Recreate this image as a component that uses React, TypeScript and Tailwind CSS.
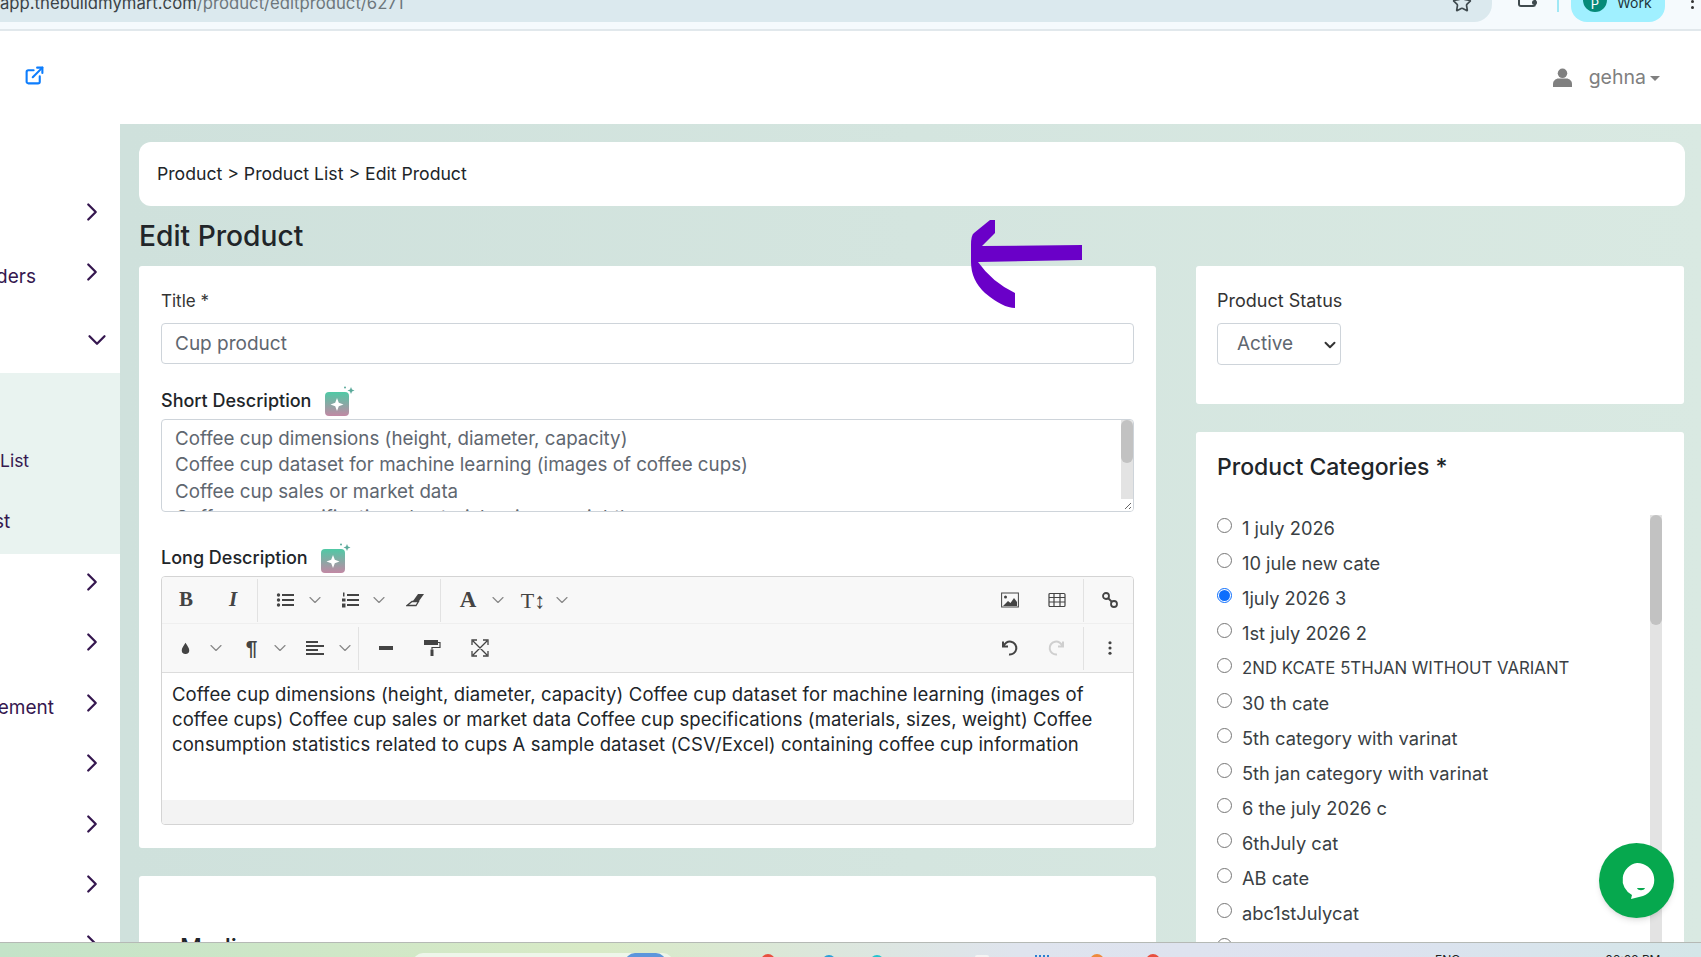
import { ChevronDown, ChevronRight, ExternalLink, Star } from "lucide-react";
import type { ReactNode } from "react";

const font = "font-['Inter','Noto_Sans',sans-serif]";

const categories = [
  "1 july 2026",
  "10 jule new cate",
  "1july 2026 3",
  "1st july 2026 2",
  "2ND KCATE 5THJAN WITHOUT VARIANT",
  "30 th cate",
  "5th category with varinat",
  "5th jan category with varinat",
  "6 the july 2026 c",
  "6thJuly cat",
  "AB cate",
  "abc1stJulycat",
];

function NavRow({ label, labelClass = "" }: { label?: string; labelClass?: string }) {
  return (
    <div className="flex h-[60.4px] items-center justify-end pr-[13px] text-[#35174f]">
      {label && <span className={`shrink-0 whitespace-nowrap text-[19px] ${labelClass}`}>{label}</span>}
      <ChevronRight className="h-[30px] w-[30px] shrink-0" strokeWidth={1.8} />
    </div>
  );
}

function Sidebar() {
  return (
    <aside className="h-full w-[120px] shrink-0 overflow-hidden bg-white pt-[58px]">
      <NavRow />
      <div className="-mt-[1px]">
        <NavRow label="Orders" labelClass="mr-[41px] mt-[12px]" />
      </div>
      <div className="flex h-[71px] items-center justify-end pr-[8px] pt-[6px] text-[#35174f]">
        <ChevronDown className="h-[30px] w-[30px] shrink-0" strokeWidth={1.8} />
      </div>
      <div className="flex h-[181px] flex-col justify-end bg-[#e9f3f0] pb-[1px] text-[19px] text-[#35174f]">
        <div className="flex h-[61px] items-center">
          <span className="text-[17.500px]">List</span>
        </div>
        <div className="flex h-[61px] items-center">
          <span className="-ml-[6px]">st</span>
        </div>
      </div>
      <div className="-mt-[2px]">
        <NavRow />
        <NavRow />
        <NavRow label="ement" labelClass="mr-[23px] mt-[10px]" />
        <NavRow />
        <NavRow />
        <NavRow />
        <NavRow />
      </div>
    </aside>
  );
}

function Sparkle() {
  return (
    <svg viewBox="0 0 32 32" className="h-8 w-8 translate-y-[1px]" aria-hidden="true">
      <defs>
        <linearGradient id="spark" x1="0" y1="0" x2="0" y2="1">
          <stop offset="0" stopColor="#4fc9a5" />
          <stop offset="1" stopColor="#c288a4" />
        </linearGradient>
      </defs>
      <rect x="2" y="7" width="24" height="24" rx="4" fill="url(#spark)" />
      <path d="M14 13l1.800 4.700L20.500 19.500l-4.700 1.800L14 26l-1.800-4.700L7.500 19.500l4.700-1.800z" fill="#fff" />
      <path d="M28 2l1 2.500 2.500 1-2.500 1-1 2.500-1-2.500-2.500-1 2.500-1z" fill="#5aa99a" />
      <circle cx="22" cy="2.500" r="1" fill="#5aa99a" />
    </svg>
  );
}

function Chev() {
  return <ChevronDown className="-mx-[3px] h-[20px] w-[20px] shrink-0 text-[#888]" strokeWidth={1.4} />;
}

function Tool({ children, className }: { children: ReactNode; className: string }) {
  return <div className={`flex h-full shrink-0 items-center justify-center text-[#444] ${className}`}>{children}</div>;
}

function Sep({ className = "" }: { className?: string }) {
  return <div className={`h-[43px] w-px shrink-0 bg-[#e2e2e2] ${className}`} />;
}

const ic = "h-[18px] w-[18px]";

function Toolbar() {
  return (
    <div className="border-b border-[#dcdcdc] bg-[#f8f8f8]">
      <div className="flex h-[47px] items-center border-b border-[#efefef]">
        <Tool className="w-[46px] pl-[2px]"><span className="font-['Liberation_Serif',serif] text-[21px] font-bold">B</span></Tool>
        <Tool className="w-[49px] pl-[1px]"><span className="font-['Liberation_Serif',serif] text-[21px] font-bold italic">I</span></Tool>
        <Sep />
        <Tool className="w-[50px] pl-[4px]">
          <svg viewBox="0 0 18 18" className={ic} fill="currentColor">
            <circle cx="2.500" cy="4" r="1.700" /><circle cx="2.500" cy="9" r="1.700" /><circle cx="2.500" cy="14" r="1.700" />
            <rect x="6" y="3" width="12" height="2" /><rect x="6" y="8" width="12" height="2" /><rect x="6" y="13" width="12" height="2" />
          </svg>
        </Tool>
        <Chev />
        <Tool className="w-[50px] pl-[5px]">
          <svg viewBox="0 0 18 18" className={ic} fill="currentColor">
            <rect x="6" y="3" width="12" height="2" /><rect x="6" y="8" width="12" height="2" /><rect x="6" y="13" width="12" height="2" />
            <rect x="2" y="1.500" width="1.500" height="4" /><rect x="1" y="7.500" width="3.500" height="3" /><rect x="1" y="12.500" width="3.500" height="4" />
          </svg>
        </Tool>
        <Chev />
        <Tool className="w-[54px] pl-[4px]">
          <svg viewBox="0 0 18 14" className={ic} fill="currentColor">
            <path d="M12 1h6l-5 7H7z" /><path d="M6 8.500h6.500L10 12.500H1z" fill="none" stroke="currentColor" strokeWidth="1.300" />
          </svg>
        </Tool>
        <Sep />
        <Tool className="w-[50px] pl-[4px]"><span className="font-['Liberation_Serif',serif] text-[23px] font-bold">A</span></Tool>
        <Chev />
        <Tool className="w-[50px] pl-[6px]"><span className="font-['Liberation_Serif',serif] text-[22px]">T↕</span></Tool>
        <Chev />
        <div className="flex-1" />
        <Tool className="w-[47px] pr-[2px]">
          <svg viewBox="0 0 18 16" className={ic} fill="currentColor">
            <rect x="0.600" y="1" width="16.800" height="14" fill="none" stroke="currentColor" />
            <circle cx="4.500" cy="5" r="1.500" /><path d="M2 14l5-5 2.500 2 3.500-5 3 4v4z" />
          </svg>
        </Tool>
        <Tool className="w-[49px] pr-[4px]">
          <svg viewBox="0 0 18 16" className={ic} fill="none" stroke="currentColor" strokeWidth="1.200">
            <rect x="1" y="1.500" width="16" height="13" rx="1" /><path d="M1 5.500h16M1 10h16M6 1.500v13M12 1.500v13" />
          </svg>
        </Tool>
        <Sep />
        <Tool className="w-[49px] pl-[3px]">
          <svg viewBox="0 0 18 18" className={ic} fill="none" stroke="currentColor" strokeWidth="1.800">
            <circle cx="5" cy="5" r="3" /><circle cx="13" cy="13" r="3" /><path d="M7 7l4 4" />
          </svg>
        </Tool>
      </div>
      <div className="flex h-[48px] items-center">
        <Tool className="w-[47px]">
          <svg viewBox="0 0 18 18" className="h-[15px] w-[15px]" fill="currentColor"><path d="M9 2c2 3.500 4.500 6 4.500 9a4.500 4.500 0 0 1-9 0c0-3 2.500-5.500 4.500-9z" /></svg>
        </Tool>
        <Chev />
        <Tool className="ml-[7px] w-[43px]"><span className="font-['Liberation_Sans',sans-serif] text-[21px] font-bold">¶</span></Tool>
        <Chev />
        <Tool className="ml-[5px] w-[46px]">
          <svg viewBox="0 0 18 18" className={ic} fill="currentColor">
            <rect x="0" y="2" width="12" height="2" /><rect x="0" y="6" width="18" height="2" /><rect x="0" y="10" width="12" height="2" /><rect x="0" y="14" width="18" height="2" />
          </svg>
        </Tool>
        <Chev />
        <Sep className="ml-[6px]" />
        <Tool className="w-[54px]"><div className="h-[4px] w-[14px] bg-[#444]" /></Tool>
        <Tool className="w-[38px]">
          <svg viewBox="0 0 18 18" className={ic} fill="currentColor">
            <path d="M1 1h14v5H1z" /><path d="M15 3.500h2v5H9v2" fill="none" stroke="currentColor" strokeWidth="1.200" /><rect x="7.500" y="10.500" width="3" height="6.500" />
          </svg>
        </Tool>
        <Tool className="w-[56px] pl-[1px]">
          <svg viewBox="0 0 18 18" className={ic} fill="none" stroke="currentColor" strokeWidth="1.300">
            <path d="M1 6V1h5M12 1h5v5M17 12v5h-5M6 17H1v-5M2 2l14 14M16 2L2 16" />
          </svg>
        </Tool>
        <div className="flex-1" />
        <Tool className="w-[47px] pr-[3px]">
          <svg viewBox="0 0 18 18" className={ic} fill="none" stroke="currentColor" strokeWidth="2">
            <path d="M3 2.500v5h5" /><path d="M3.500 7.500A6.500 6.500 0 1 1 9 15.500" />
          </svg>
        </Tool>
        <Tool className="w-[49px] pr-[4px]">
          <svg viewBox="0 0 18 18" className={`${ic} text-[#cfcfcf]`} fill="none" stroke="currentColor" strokeWidth="2">
            <path d="M15 2.500v5h-5" /><path d="M14.500 7.500A6.500 6.500 0 1 0 9 15.500" />
          </svg>
        </Tool>
        <Sep />
        <Tool className="w-[49px] pl-[3px]">
          <svg viewBox="0 0 4 16" className="h-[14px] w-[4px]" fill="currentColor"><circle cx="2" cy="2" r="1.800" /><circle cx="2" cy="8" r="1.800" /><circle cx="2" cy="14" r="1.800" /></svg>
        </Tool>
      </div>
    </div>
  );
}

function Taskbar() {
  return (
    <div className="flex h-[15px] shrink-0 items-start overflow-hidden border-t border-[#b5b9b5] bg-[linear-gradient(90deg,#c4e3c8_0%,#d8eac6_35%,#dfe4ee_60%,#dde2f0_80%,#d4e6e8_100%)]">
      <div className="ml-[413px] mt-[10px] flex h-[10px] w-[260px] shrink-0 justify-end rounded-t-[10px] bg-[#eef6ea] pr-[7px]">
        <div className="h-[10px] w-[41px] rounded-t-[10px] bg-[#5c96dc]" />
      </div>
      <div className="ml-[88px] mt-[11px] h-[14px] w-[14px] shrink-0 rounded-full bg-[#e8503f]" />
      <div className="ml-[47px] mt-[12px] h-[14px] w-[14px] shrink-0 rounded-full bg-[#2a9fd8]" />
      <div className="ml-[34px] mt-[12px] h-[14px] w-[14px] shrink-0 rounded-full bg-[#22c3cf]" />
      <div className="ml-[91px] mt-[12px] h-[14px] w-[14px] shrink-0 rounded-[2px] bg-[#f4f4f4]" />
      <div className="ml-[46px] mt-[12px] h-[14px] w-[14px] shrink-0 bg-[repeating-linear-gradient(90deg,#2b7fd0_0px,#2b7fd0_2px,transparent_2px,transparent_4px)]" />
      <div className="ml-[41px] mt-[11px] h-[14px] w-[14px] shrink-0 rounded-full bg-[#ee8a3c]" />
      <div className="ml-[42px] mt-[11px] h-[14px] w-[14px] shrink-0 rounded-full bg-[#e8503f]" />
      <span className="ml-[275px] mt-[10px] shrink-0 text-[12px] leading-[14px] text-[#222]">ENG</span>
      <span className="ml-[145px] mt-[10px] shrink-0 text-[12px] leading-[14px] text-[#222]">06:02 PM</span>
    </div>
  );
}

export default function App() {
  return (
    <div className={`${font} relative flex h-[957px] w-[1701px] flex-col overflow-hidden bg-white text-[#212529]`}>
      {/* browser chrome, cut off at the top */}
      <div className="flex h-[31px] shrink-0 items-start border-b-2 border-[#e1e8ec] bg-[#f5fafd]">
        <div className="flex h-[22px] w-[1492px] items-end justify-between rounded-br-[18px] bg-[#dbe9ee] pr-[20px]">
          <span className="mb-[8px] whitespace-nowrap text-[16.700px] leading-[22px] text-[#3b4347]">
            app.thebuildmymart.com<span className="text-[#6d777c]">/product/editproduct/6271</span>
          </span>
          <Star className="mb-[9px] h-[20px] w-[20px] shrink-0 text-[#3f4a4e]" strokeWidth={2} />
        </div>
        <div className="relative ml-[26px] h-[7px] w-[18px] rounded-b-[3px] border-2 border-t-0 border-[#3f4a4e]">
          <div className="absolute -right-[3px] top-0 h-[5px] w-[5px] rounded-full bg-[#3f4a4e]" />
        </div>
        <div className="ml-[21px] h-[12px] w-[2px] bg-[#a0e8f5]" />
        <div className="ml-[12px] flex h-[22px] w-[94px] items-start gap-[10px] rounded-b-[16px] bg-[#a0f0ff] pl-[12px]">
          <div className="-mt-[12px] flex h-[24px] w-[24px] shrink-0 items-end justify-center rounded-full bg-[#068a78] pb-[1px] text-[13px] leading-none text-white">P</div>
          <span className="-mt-[4px] text-[14px] leading-none text-[#22343a]">Work</span>
        </div>
        <div className="ml-[26px] flex flex-col gap-[3px]">
          <div className="h-[3px] w-[3px] rounded-full bg-[#333]" />
          <div className="h-[3px] w-[3px] rounded-full bg-[#333]" />
        </div>
      </div>

      {/* app header */}
      <header className="flex h-[93px] shrink-0 items-center justify-between bg-white pl-[24px] pr-[41px]">
        <ExternalLink className="-mt-[4px] h-[21px] w-[21px] text-[#0d7dfd]" strokeWidth={2.4} />
        <div className="flex items-center text-[#808080]">
          <svg viewBox="0 0 18 18" className="h-[19px] w-[19px]" fill="currentColor">
            <circle cx="9" cy="5" r="4.500" /><path d="M0 18v-3c0-3 3-5 5-5h8c2 0 5 2 5 5v3z" />
          </svg>
          <span className="ml-[17px] text-[19.500px]">gehna</span>
          <span className="ml-[4px] mt-[1px] h-0 w-0 border-x-[5px] border-t-[5px] border-x-transparent border-t-[#808080]" />
        </div>
      </header>

      <div className="flex min-h-0 flex-1">
        <Sidebar />
        <main className="flex min-w-0 flex-1 flex-col overflow-hidden bg-gradient-to-r from-[#cfe1dc] to-[#d9e9e2] pl-[19px] pr-[16px] pt-[18px]">
          <div className="flex h-[64px] shrink-0 items-center rounded-[12px] bg-white pl-[18px] text-[17.650px]">
            Product &gt; Product List &gt; Edit Product
          </div>
          <h1 className="mt-[13px] h-[47px] text-[28.200px] font-medium leading-[34px]">Edit Product</h1>

          <div className="flex min-h-0 flex-1 items-start gap-[40px]">
            <div className="flex w-[1017px] shrink-0 flex-col gap-[28px]">
              <section className="h-[582px] rounded-[3px] bg-white px-[22px] pt-[22px]">
                <label className="block text-[17px] leading-[26px] text-[#333]">Title *</label>
                <div className="mt-[9px] flex h-[41px] items-center rounded-[4px] border border-[#ced4da] pl-[13px] pt-[1px] text-[19px] text-[#5f6770]">
                  Cup product
                </div>

                <div className="mt-[18px] flex h-[36px] items-center gap-[12px] text-[18px] font-medium">
                  Short Description <Sparkle />
                </div>
                <div className="relative mt-[1px] h-[93px] overflow-hidden rounded-[4px] border border-[#ced4da] pl-[13px] pt-[6px] text-[18.750px] leading-[26.400px] text-[#5f6770]">
                  <div className="w-[880px] whitespace-nowrap">
                    <div>Coffee cup dimensions (height, diameter, capacity)</div>
                    <div>Coffee cup dataset for machine learning (images of coffee cups)</div>
                    <div>Coffee cup sales or market data</div>
                    <div>Coffee cup specifications (materials, sizes, weight)</div>
                  </div>
                  <div className="absolute bottom-0 right-0 top-0 w-[12px] bg-[#e3e3e3]">
                    <div className="h-[43px] rounded-full bg-[#c2c2c2]" />
                    <svg viewBox="0 0 12 12" className="absolute bottom-0 right-0 h-[12px] w-[12px] bg-white" stroke="#666" strokeWidth="1">
                      <path d="M4 10l6-6M8 10l2-2" />
                    </svg>
                  </div>
                </div>

                <div className="mt-[27px] flex h-[36px] items-center gap-[11px] text-[18px] font-medium">
                  Long Description <Sparkle />
                </div>
                <div className="mt-[1px] overflow-hidden rounded-[4px] border border-[#d4d4d4]">
                  <Toolbar />
                  <div className="h-[127px] px-[10px] pt-[9px] text-[18.500px] leading-[25px] tracking-[0.1px] text-[#212529]">
                    Coffee cup dimensions (height, diameter, capacity) Coffee cup dataset for machine learning (images of coffee cups) Coffee cup sales or market data Coffee cup specifications (materials, sizes, weight) Coffee consumption statistics related to cups A sample dataset (CSV/Excel) containing coffee cup information
                  </div>
                  <div className="h-[24px] bg-[#f3f3f3]" />
                </div>
              </section>
              <section className="h-[200px] shrink-0 rounded-[3px] bg-white pl-[41px] pt-[54px]">
                <h2 className="text-[24px] font-medium">Media</h2>
              </section>
            </div>

            <div className="flex w-[488px] shrink-0 flex-col gap-[28px]">
              <section className="h-[138px] rounded-[3px] bg-white pl-[21px] pt-[22px]">
                <label className="block text-[18px] leading-[26px] text-[#333]">Product Status</label>
                <div className="mt-[9px] flex h-[42px] w-[124px] items-center justify-between rounded-[4px] border border-[#ced4da] pl-[19px] pr-[1px] pt-[1px] text-[19px] text-[#5f6770]">
                  Active <ChevronDown className="h-[18px] w-[18px] text-[#333]" strokeWidth={2.6} />
                </div>
              </section>
              <section className="h-[560px] rounded-[3px] bg-white pl-[21px] pt-[19px]">
                <h2 className="text-[23px] font-medium leading-[32px]">Product Categories *</h2>
                <div className="relative mt-[32px] h-[430px] overflow-hidden">
                  <div className="-mt-[5px] flex flex-col">
                    {categories.map((c, i) => (
                      <label key={c} className={`flex h-[35px] shrink-0 items-center text-[#3a3f44] ${i === 4 ? "text-[16.800px]" : "text-[18.300px]"}`}>
                        <span className={`mb-[5px] flex h-[15px] w-[15px] shrink-0 items-center justify-center rounded-full border ${i === 2 ? "border-[#0d6efd]" : "border-[#777]"}`}>
                          {i === 2 && <span className="h-[11px] w-[11px] rounded-full bg-[#0d6efd]" />}
                        </span>
                        <span className="ml-[10px] mt-[2px] whitespace-nowrap">{c}</span>
                      </label>
                    ))}
                    <span className="mt-[8px] h-[15px] w-[15px] rounded-full border border-[#777]" />
                  </div>
                  <div className="absolute bottom-0 right-[22px] top-0 w-[12px] bg-[#e3e3e3]">
                    <div className="h-[110px] rounded-full bg-[#c2c2c2]" />
                  </div>
                </div>
              </section>
            </div>
          </div>
        </main>
      </div>

      <Taskbar />

      {/* hand drawn arrow over the screenshot */}
      <svg viewBox="0 0 114 92" className="absolute left-[970px] top-[218px] h-[92px] w-[114px]" aria-hidden="true">
        <path d="M20 2L25 2L25 15L12 28L112 27L112 42L8 44Q22 64 45 75L45 90Q33 90 15 75Q1 62 1 44L1 27Q1 17 4 15Z" fill="#6a00c8" />
      </svg>

      {/* chat bubble */}
      <div className="absolute left-[1599px] top-[843px] flex h-[75px] w-[75px] items-center justify-center rounded-full bg-[#06a84e] shadow-md">
        <svg viewBox="0 0 40 40" className="h-[40px] w-[40px]" aria-hidden="true">
          <path d="M20 2a17 17 0 0 1 6 33l-12 3 1-4A17 17 0 0 1 20 2z" fill="#fff" />
          <path d="M20 27h8c-1 3-7 3-8 0z" fill="#06a84e" />
        </svg>
      </div>
    </div>
  );
}
